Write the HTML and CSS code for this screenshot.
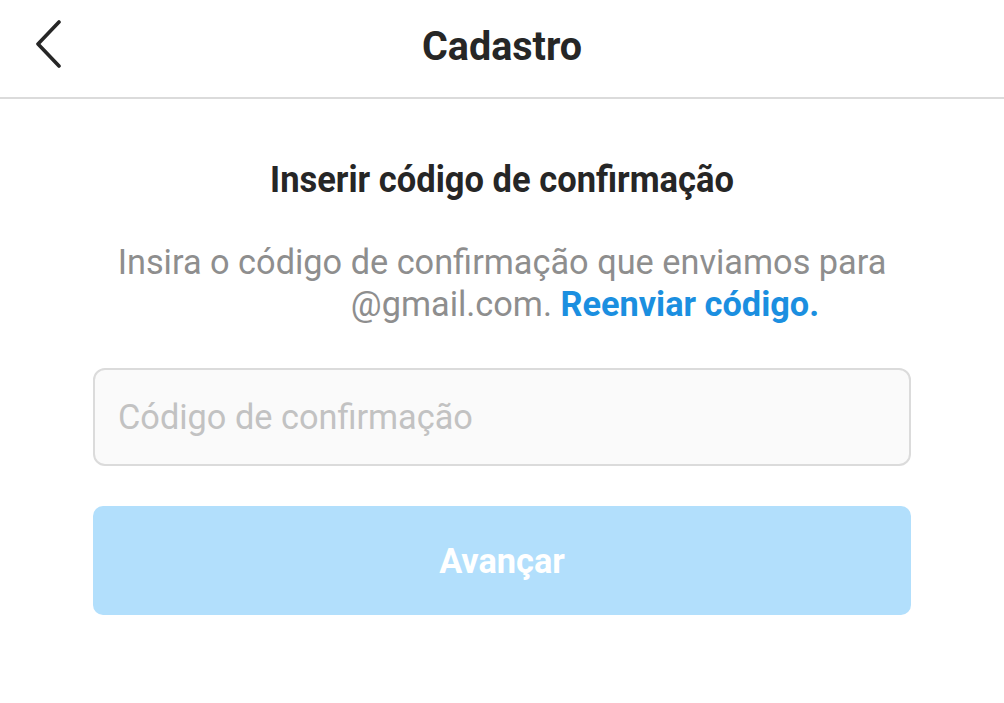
FILE: index.html
```html
<!DOCTYPE html>
<html lang="pt">
<head>
<meta charset="utf-8">
<link rel="stylesheet" href="styles.css">
</head>
<body>
<header class="topbar">
  <button class="back" aria-label="Voltar">
    <svg width="28" height="48" viewBox="0 0 28 48"><path d="M25 2 L4 24 L25 46" fill="none" stroke="#262626" stroke-width="3.6" stroke-linecap="round" stroke-linejoin="round"/></svg>
  </button>
  <h1 class="title">Cadastro</h1>
</header>
<main class="content">
  <h2 class="heading">Inserir código de confirmação</h2>
  <p class="desc">Insira o código de confirmação que enviamos para<br><span class="redacted"></span>@gmail.com. <a class="link" href="#">Reenviar código.</a></p>
  <input class="field" type="text" placeholder="Código de confirmação">
  <button class="next">Avançar</button>
</main>
</body>
</html>
```
FILE: styles.css
```css
* { box-sizing: border-box; }
html, body { margin: 0; padding: 0; background: #fff; }
body { font-family: Roboto, "Noto Sans", Arial, sans-serif; color: #262626; }
.topbar {
  height: 99px;
  border-bottom: 2px solid #dbdbdb;
  display: flex;
  align-items: center;
  justify-content: center;
  position: relative;
}
.back {
  position: absolute;
  left: 34px;
  top: 20px;
  background: none;
  border: 0;
  padding: 0;
  display: flex;
}
.title {
  margin: -6px 0 0;
  font-size: 39.5px;
  font-weight: 700;
  transform: scaleY(1.05);
}
.content {
  display: flex;
  flex-direction: column;
  align-items: center;
  padding: 0 93px;
}
.heading {
  margin: 60px 0 0;
  font-size: 34.5px;
  font-weight: 700;
  transform: scaleY(1.05);
}
.desc {
  margin: 42px 0 0;
  font-size: 34.3px;
  line-height: 42px;
  color: #8e8e8e;
  text-align: center;
  white-space: nowrap;
}
.redacted { display: inline-block; width: 166px; height: 1px; }
.link { color: #1b8fe0; font-weight: 700; text-decoration: none; }
.field {
  margin-top: 43px;
  width: 100%;
  height: 98px;
  border: 2px solid #dbdbdb;
  border-radius: 12px;
  background: #fafafa;
  padding: 0 23px;
  font-family: inherit;
  font-size: 34.3px;
  color: #262626;
  outline: none;
}
.field::placeholder { color: #c2c2c2; }
.next {
  margin-top: 40px;
  width: 100%;
  height: 109px;
  border: 0;
  border-radius: 10px;
  background: #b2dffc;
  color: #fff;
  font-family: inherit;
  font-size: 34.3px;
  font-weight: 700;
}
```
